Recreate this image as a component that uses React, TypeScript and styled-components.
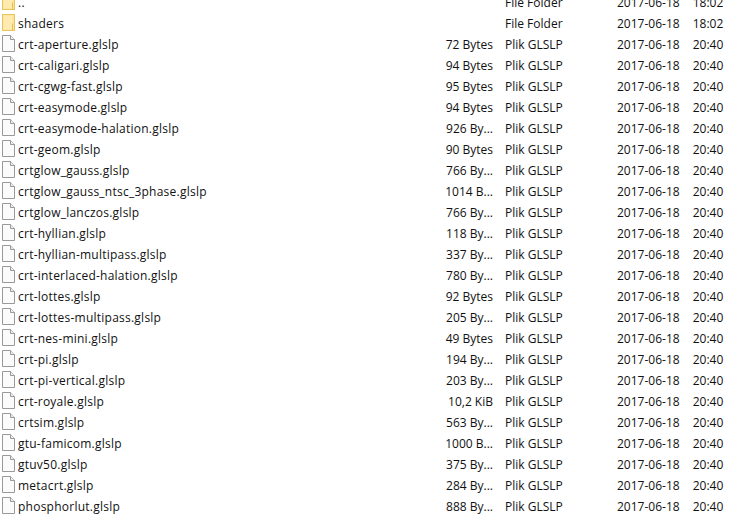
import React from "react";
import styled, { createGlobalStyle } from "styled-components";

const Global = createGlobalStyle`
  html, body { margin: 0; padding: 0; background: #fff; overflow: hidden; }
`;

const List = styled.div`
  width: 742px;
  height: 530px;
  overflow: hidden;
  font-family: "Open Sans", "Noto Sans", sans-serif;
  font-size: 12px;
  color: #111;
  display: flex;
  flex-direction: column;
`;

const Rows = styled.div`
  margin-top: -8px;
  display: flex;
  flex-direction: column;
`;

const Row = styled.div`
  display: grid;
  grid-template-columns: 18px 424px 51px 12px 112px auto;
  align-items: center;
  height: 21px;
  line-height: 21px;
  white-space: nowrap;
`;

const IconCell = styled.div`
  display: flex;
  align-items: flex-start;
  padding: 1px 0 0 2px;
  height: 20px;
`;

const Name = styled.div`
  letter-spacing: 0.02em;
`;

const Size = styled.div`
  grid-column: 3;
  display: flex;
  justify-content: flex-end;
`;

const Type = styled.div`
  grid-column: 5;
`;

const Modified = styled.div`
  grid-column: 6;
  word-spacing: 10px;
`;

const FolderIcon = () => (
  <svg width="13" height="17" viewBox="0 0 13 17">
    <rect x="0.5" y="0.5" width="12" height="16" fill="#ffe59a" stroke="#e8c45c" />
    <path d="M1.5 1.5h9v14h-9z" fill="#ffeab0" />
    <path d="M10.5 9.5v7" stroke="#e3bd55" />
  </svg>
);

const FileIcon = () => (
  <svg width="13" height="17" viewBox="0 0 13 17">
    <path d="M0.500 0.500h8l4 4v12h-12z" fill="#fbfbfb" stroke="#999999" />
    <path d="M8.500 0.500v4h4" fill="#eeeeee" stroke="#999999" />
  </svg>
);

type Item = { name: string; size?: string; type: string; time: string; folder?: boolean };

const f = (name: string, size: string): Item => ({ name, size, type: "Plik GLSLP", time: "20:40" });

const items: Item[] = [
  { name: "..", type: "File Folder", time: "18:02", folder: true },
  { name: "shaders", type: "File Folder", time: "18:02", folder: true },
  f("crt-aperture.glslp", "72 Bytes"),
  f("crt-caligari.glslp", "94 Bytes"),
  f("crt-cgwg-fast.glslp", "95 Bytes"),
  f("crt-easymode.glslp", "94 Bytes"),
  f("crt-easymode-halation.glslp", "926 By..."),
  f("crt-geom.glslp", "90 Bytes"),
  f("crtglow_gauss.glslp", "766 By..."),
  f("crtglow_gauss_ntsc_3phase.glslp", "1014 B..."),
  f("crtglow_lanczos.glslp", "766 By..."),
  f("crt-hyllian.glslp", "118 By..."),
  f("crt-hyllian-multipass.glslp", "337 By..."),
  f("crt-interlaced-halation.glslp", "780 By..."),
  f("crt-lottes.glslp", "92 Bytes"),
  f("crt-lottes-multipass.glslp", "205 By..."),
  f("crt-nes-mini.glslp", "49 Bytes"),
  f("crt-pi.glslp", "194 By..."),
  f("crt-pi-vertical.glslp", "203 By..."),
  f("crt-royale.glslp", "10,2 KiB"),
  f("crtsim.glslp", "563 By..."),
  f("gtu-famicom.glslp", "1000 B..."),
  f("gtuv50.glslp", "375 By..."),
  f("metacrt.glslp", "284 By..."),
  f("phosphorlut.glslp", "888 By..."),
];

export default function App() {
  return (
    <>
      <Global />
      <List>
        <Rows>
          {items.map((it) => (
            <Row key={it.name}>
              <IconCell>{it.folder ? <FolderIcon /> : <FileIcon />}</IconCell>
              <Name>{it.name}</Name>
              <Size>{it.size}</Size>
              <Type>{it.type}</Type>
              <Modified>2017-06-18 {it.time}</Modified>
            </Row>
          ))}
        </Rows>
      </List>
    </>
  );
}
